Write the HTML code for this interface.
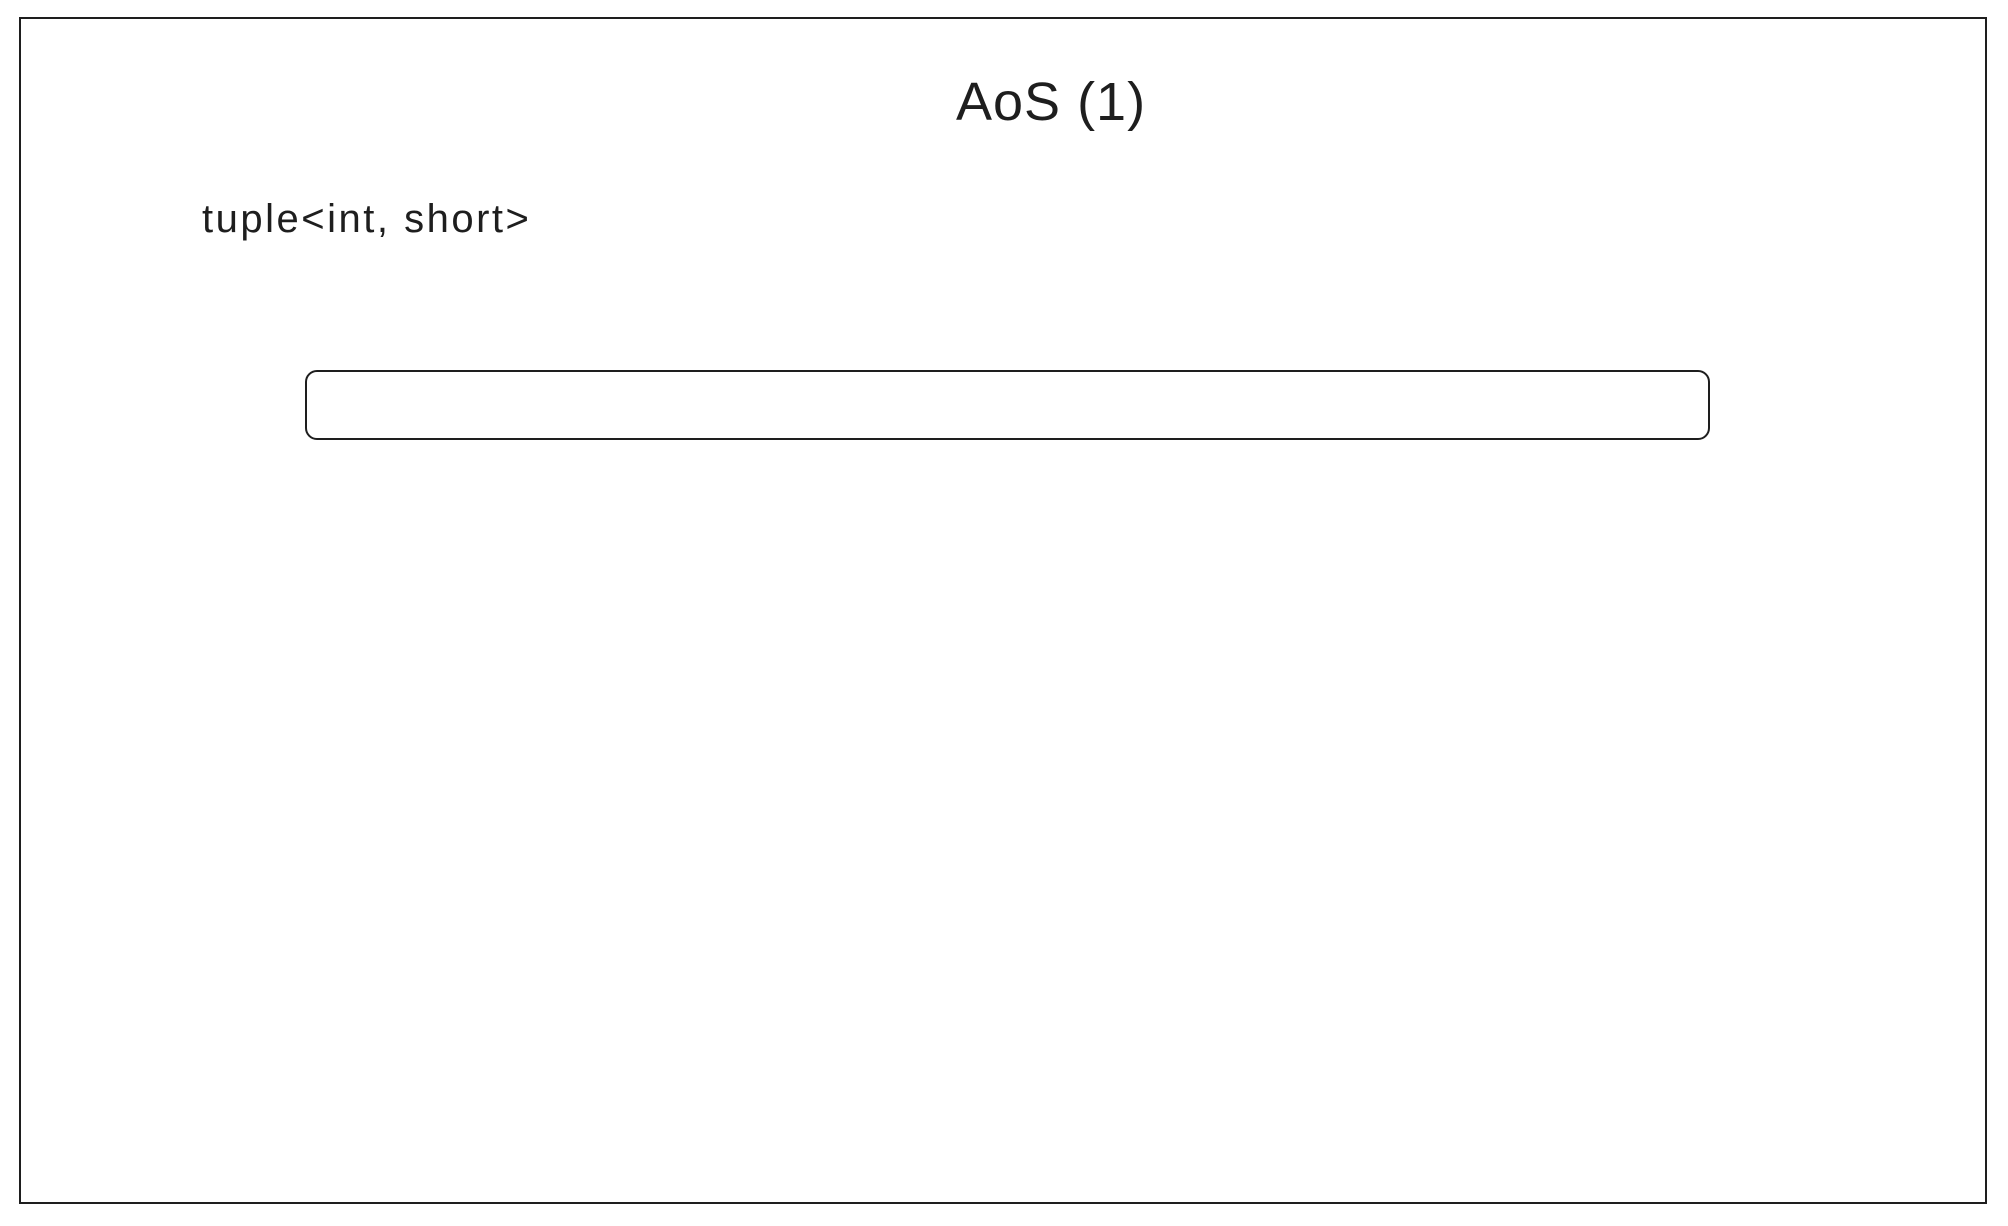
<!DOCTYPE html>
<html><head><meta charset="utf-8"><style>
html,body{margin:0;padding:0;background:#fff;width:2008px;height:1226px;overflow:hidden;position:relative;font-family:"Liberation Sans",sans-serif;color:#1e1e1e}
.frame{position:absolute;left:19px;top:17px;width:1968px;height:1187px;border:2px solid #1e1e1e;box-sizing:border-box}
.title{position:absolute;left:956px;top:72px;font-size:54px;line-height:60px;white-space:nowrap;letter-spacing:1px}
.sub{position:absolute;left:202px;top:196px;font-size:40px;line-height:46px;white-space:nowrap;letter-spacing:2.5px}
.bar{position:absolute;left:305px;top:370px;width:1405px;height:70px;border:2.5px solid #1e1e1e;border-radius:12px;box-sizing:border-box}
</style></head><body>
<div class="frame"></div>
<div class="title">AoS (1)</div>
<div class="sub">tuple&lt;int, short&gt;</div>
<div class="bar"></div>
</body></html>
